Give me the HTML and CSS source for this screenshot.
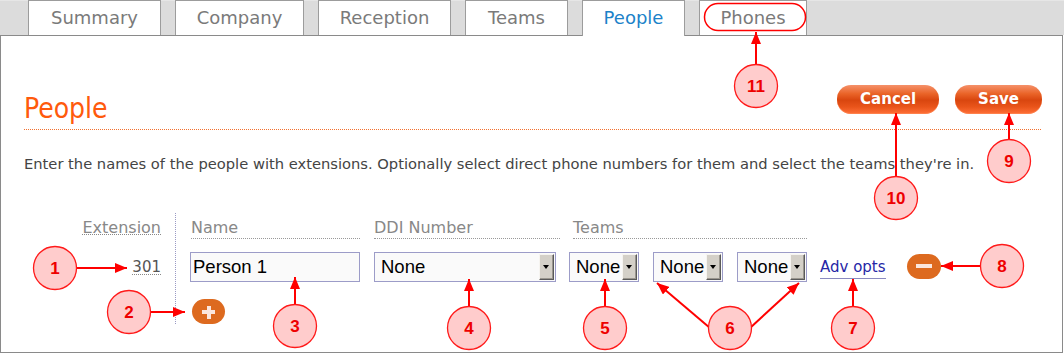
FILE: index.html
```html
<!DOCTYPE html>
<html lang="en">
<head>
<meta charset="utf-8">
<title>People</title>
<link rel="stylesheet" href="styles.css">
</head>
<body>
<div class="app">
  <nav class="tabs">
    <div class="tab tab-summary">Summary</div>
    <div class="tab tab-company">Company</div>
    <div class="tab tab-reception">Reception</div>
    <div class="tab tab-teams">Teams</div>
    <div class="tab tab-people active">People</div>
    <div class="tab tab-phones">Phones</div>
  </nav>
  <main class="panel">
    <header class="page-head">
      <h1 class="page-title">People</h1>
      <div class="actions">
        <button class="btn">Cancel</button>
        <button class="btn">Save</button>
      </div>
    </header>
    <p class="intro">Enter the names of the people with extensions. Optionally select direct phone numbers for them and select the teams they're in.</p>
    <section class="people-form">
      <div class="ext-col">
        <div class="ext-head"><span class="abbr">Extension</span></div>
        <div class="ext-val"><span class="abbr abbr-num">301</span></div>
      </div>
      <div class="form-grid">
        <div class="col-head head-name">Name</div>
        <div class="col-head head-ddi">DDI Number</div>
        <div class="col-head head-teams">Teams</div>

        <input class="text-input" type="text" value="Person 1">
        <div class="select select-ddi"><span class="select-value">None</span><span class="select-btn"></span></div>
        <div class="teams">
          <div class="select select-team"><span class="select-value">None</span><span class="select-btn"></span></div>
          <div class="select select-team"><span class="select-value">None</span><span class="select-btn"></span></div>
          <div class="select select-team"><span class="select-value">None</span><span class="select-btn"></span></div>
        </div>
        <a class="adv-link" href="#">Adv opts</a>
        <button class="round-btn minus" aria-label="Remove"></button>

        <button class="round-btn plus" aria-label="Add"></button>
      </div>
    </section>
  </main>

  <svg class="annotations" width="1064" height="353" viewBox="0 0 1064 353">
    <defs>
      <marker id="ah" viewBox="0 0 12 10" refX="12" refY="5" markerWidth="12" markerHeight="10" markerUnits="userSpaceOnUse" orient="auto">
        <path d="M0,0 L12,5 L0,10 z" fill="#ff0000"/>
      </marker>
    </defs>
    <rect x="704.5" y="3.5" width="101" height="27" rx="13.5" fill="none" stroke="#ff0000" stroke-width="1.5"/>
    <g stroke="#ff0000" stroke-width="2" fill="none" marker-end="url(#ah)">
      <line x1="77" y1="268" x2="127" y2="268"/>
      <line x1="151" y1="312" x2="185" y2="312"/>
      <line x1="295" y1="305" x2="295" y2="277"/>
      <line x1="469" y1="307" x2="469" y2="279"/>
      <line x1="605" y1="307" x2="605" y2="279"/>
      <line x1="710" y1="328" x2="657" y2="283"/>
      <line x1="750" y1="328" x2="799" y2="283"/>
      <line x1="853" y1="307" x2="853" y2="279"/>
      <line x1="981" y1="266" x2="941" y2="266"/>
      <line x1="1009" y1="140" x2="1009" y2="113"/>
      <line x1="896" y1="177" x2="896" y2="113"/>
      <line x1="756" y1="65" x2="756" y2="32"/>
    </g>
    <g fill="#ffcccc" stroke="#ff1a1a" stroke-width="1.3">
      <circle cx="55" cy="268" r="21.5"/>
      <circle cx="129" cy="312" r="21.5"/>
      <circle cx="295" cy="326" r="21.5"/>
      <circle cx="469" cy="328" r="21.5"/>
      <circle cx="605" cy="328" r="21.5"/>
      <circle cx="730" cy="328" r="21.5"/>
      <circle cx="853" cy="328" r="21.5"/>
      <circle cx="1002" cy="266" r="21.5"/>
      <circle cx="1009" cy="161" r="21.5"/>
      <circle cx="896" cy="198" r="21.5"/>
      <circle cx="756" cy="86" r="21.5"/>
    </g>
    <g class="ann-num" fill="#ee0000" text-anchor="middle">
      <text x="55" y="274">1</text>
      <text x="129" y="318">2</text>
      <text x="295" y="332">3</text>
      <text x="469" y="334">4</text>
      <text x="605" y="334">5</text>
      <text x="730" y="334">6</text>
      <text x="853" y="334">7</text>
      <text x="1002" y="272">8</text>
      <text x="1009" y="167">9</text>
      <text x="896" y="204">10</text>
      <text x="756" y="92">11</text>
    </g>
  </svg>
</div>
</body>
</html>
```

FILE: styles.css
```css
* { box-sizing: border-box; }

html, body {
  margin: 0;
  padding: 0;
  background: #ffffff;
}

body {
  font-family: "DejaVu Sans", Verdana, sans-serif;
  width: 1064px;
  height: 353px;
  overflow: hidden;
}

.app {
  position: relative;
  width: 1064px;
  height: 353px;
}

/* ---------- tabs ---------- */
.tabs {
  display: flex;
  align-items: flex-start;
  gap: 14px;
  height: 35px;
  padding-left: 28px;
  background: #dcdcdc;
  box-shadow: inset 0 1px 0 #e6e6e6;
}

.tab {
  height: 35px;
  background: #ffffff;
  border: 1px solid #9c9c9c;
  border-bottom: 0;
  font-family: "DejaVu Sans", sans-serif;
  font-size: 18px;
  line-height: 34px;
  color: #7a7a7a;
  text-align: center;
  white-space: nowrap;
}

.tab-summary { width: 133px; }
.tab-company { width: 129px; }
.tab-reception { width: 133px; }
.tab-teams { width: 103px; }
.tab-people { width: 103px; }
.tab-phones { width: 108px; }

.tab.active {
  position: relative;
  z-index: 1;
  height: 36px;
  color: #1b82c9;
}

/* ---------- panel ---------- */
.panel {
  width: 1063px;
  height: 318px;
  border: 1px solid #8a8a8a;
}

.page-head {
  display: flex;
  align-items: flex-end;
  justify-content: space-between;
  margin: 49px 20px 0 23px;
  padding-bottom: 1px;
  background: repeating-linear-gradient(90deg, #f3702e 0 1px, transparent 1px 2px) left bottom / 100% 1px no-repeat;
}

.page-title {
  margin: 0 0 6px;
  font-family: "DejaVu Sans Condensed", "DejaVu Sans", sans-serif;
  font-weight: normal;
  font-size: 28px;
  line-height: 28px;
  color: #ff5a0c;
}

.actions {
  display: flex;
  gap: 16px;
  margin-bottom: 15px;
}

.btn {
  height: 29px;
  padding: 0 23px;
  border: 0;
  border-radius: 14px;
  background: linear-gradient(#f5916a 0%, #ea6428 30%, #d9460f 52%, #e9541a 75%, #ff7038 100%);
  box-shadow: inset 0 -1px 0 rgba(255, 140, 90, 0.6);
  font-family: "DejaVu Sans", sans-serif;
  font-weight: bold;
  font-size: 15px;
  line-height: 29px;
  color: #ffffff;
  cursor: pointer;
}

.intro {
  margin: 25px 0 0 23px;
  font-size: 14.7px;
  line-height: 18px;
  color: #444444;
}

/* ---------- form ---------- */
.people-form {
  display: flex;
  margin-top: 40px;
  padding-bottom: 6px;
}

.ext-col {
  display: grid;
  grid-template-rows: 26px 43px 42px;
  width: 175px;
  padding-right: 14px;
  border-right: 1px dotted #9a9ac4;
  text-align: right;
}

.ext-head {
  align-self: end;
  height: 21px;
  font-size: 16px;
  line-height: 20px;
  color: #888888;
}

.ext-val {
  align-self: end;
  height: 30px;
  font-size: 15px;
  line-height: 30px;
  color: #555555;
}

.abbr {
  display: inline-block;
  line-height: 13px;
  border-bottom: 1px dotted #888888;
}

.abbr-num {
  line-height: 14px;
}

.form-grid {
  display: grid;
  grid-template-columns: 184px 195px 251px 87px 34px;
  grid-template-rows: 26px 43px 42px;
  padding-left: 14px;
}

.col-head {
  grid-row: 1;
  align-self: end;
  height: 21px;
  font-size: 16px;
  line-height: 20px;
  color: #888888;
  border-bottom: 1px dotted #999999;
  white-space: nowrap;
}

.head-name { margin-left: 1px; width: 169px; }
.head-ddi { width: 186px; }
.head-teams { margin-left: 4px; width: 234px; }

.text-input {
  grid-row: 2;
  align-self: end;
  width: 170px;
  height: 30px;
  margin: 0;
  padding: 0 2px;
  border: 1px solid #9c9cc8;
  border-radius: 0;
  background: #fafafa;
  font-family: "Liberation Sans", Arial, sans-serif;
  font-size: 18.5px;
  color: #000000;
  outline: none;
}

.select {
  display: flex;
  height: 30px;
  padding: 1px;
  border: 1px solid #9c9cc8;
  background: #fafafa;
  overflow: hidden;
}

.select-ddi {
  grid-row: 2;
  align-self: end;
  width: 182px;
}

.select-value {
  flex: 1;
  min-width: 0;
  padding-left: 5px;
  font-family: "Liberation Sans", Arial, sans-serif;
  font-size: 18.5px;
  line-height: 26px;
  color: #000000;
  white-space: nowrap;
  overflow: hidden;
}

.select-btn {
  position: relative;
  flex: none;
  width: 15px;
  height: 26px;
  background: #d4d0c8;
  border: 1px solid;
  border-color: #f6f4f0 #5a5a5a #5a5a5a #f6f4f0;
  box-shadow: inset -1px -1px 0 #9a968e;
}

.select-btn::after {
  content: "";
  position: absolute;
  left: 3px;
  top: 10px;
  border-left: 3.5px solid transparent;
  border-right: 3.5px solid transparent;
  border-top: 4px solid #000000;
}

.teams {
  grid-row: 2;
  align-self: end;
  display: flex;
  gap: 14px;
}

.select-team {
  width: 70px;
}

.adv-link {
  grid-row: 2;
  align-self: end;
  justify-self: start;
  margin-bottom: 3px;
  font-family: "DejaVu Sans", sans-serif;
  font-size: 15px;
  line-height: 18px;
  padding-bottom: 2px;
  color: #2626a6;
  text-decoration: none;
  border-bottom: 1px solid #8a8ac0;
}

.round-btn {
  position: relative;
  height: 25px;
  padding: 0;
  border: 0;
  border-radius: 13px;
  background: #dd6a1f;
  cursor: pointer;
}

.minus {
  grid-row: 2;
  align-self: end;
  width: 34px;
  margin-bottom: 3px;
}

.minus::after {
  content: "";
  position: absolute;
  left: 9px;
  top: 10px;
  width: 16px;
  height: 4px;
  background: #fbe6dc;
}

.plus {
  grid-row: 3;
  grid-column: 1;
  align-self: end;
  justify-self: start;
  width: 33px;
  margin-left: 2px;
}

.plus::before,
.plus::after {
  content: "";
  position: absolute;
  background: #fbe6dc;
}

.plus::before {
  left: 10px;
  top: 11px;
  width: 13px;
  height: 4px;
}

.plus::after {
  left: 14.5px;
  top: 6.5px;
  width: 4px;
  height: 13px;
}

/* ---------- annotations overlay ---------- */
.annotations {
  position: absolute;
  left: 0;
  top: 0;
  pointer-events: none;
}

.ann-num {
  font-family: "Liberation Sans", Arial, sans-serif;
  font-weight: bold;
  font-size: 17px;
}
```
